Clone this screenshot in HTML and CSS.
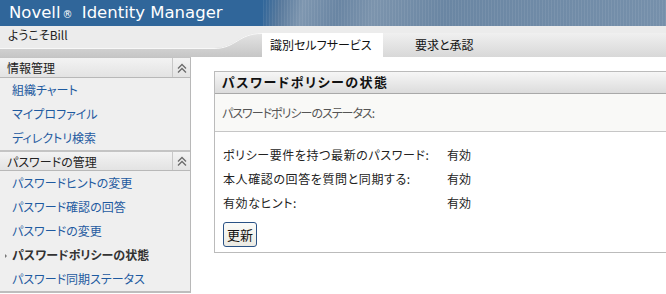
FILE: index.html
```html
<!DOCTYPE html>
<html lang="ja">
<head>
  <meta charset="UTF-8">
  <title>Novell Identity Manager</title>
  <link rel="stylesheet" href="styles.css">
</head>
<body>
  <div class="topbar">
    <div class="brand">Novell<span class="reg">®</span> Identity Manager</div>
    <div class="texture"></div>
  </div>
  <div class="subbar">
    <div class="welcome">
      <svg class="welcome-bg" width="262" height="31" viewBox="0 0 262 31">
        <defs>
          <linearGradient id="band" x1="0" y1="0" x2="0" y2="1">
            <stop offset="0" stop-color="#e4e4e4"/>
            <stop offset="1" stop-color="#c6c6c6"/>
          </linearGradient>
        </defs>
        <rect width="262" height="31" fill="#ececec"/>
        <path d="M0 22 H214 C236 22 238 7 262 7 V31 H0 Z" fill="url(#band)"/>
        <path d="M0 22.5 H214 C236 22.5 238 7.5 262 7.5" fill="none" stroke="#f8f8f8" stroke-width="1"/>
      </svg>
      <span class="welcome-text">ようこそBill</span>
    </div>
    <div class="tabs">
      <span class="tab active">識別セルフサービス</span>
      <span class="tab">要求と承認</span>
    </div>
  </div>
  <div class="main">
    <div class="sidebar">
      <div class="side-section">
        <div class="side-head">
          <span class="head-label">情報管理</span>
          <span class="toggle"><svg width="10" height="10" viewBox="0 0 10 10"><path d="M1 5.5 L5 1.5 L9 5.5 M1 9.5 L5 5.5 L9 9.5" fill="none" stroke="#6a6a6a" stroke-width="1.3"/></svg></span>
        </div>
        <a class="side-item">組織チャート</a>
        <a class="side-item">マイプロファイル</a>
        <a class="side-item">ディレクトリ検索</a>
      </div>
      <div class="side-section second">
        <div class="side-head">
          <span class="head-label">パスワードの管理</span>
          <span class="toggle"><svg width="10" height="10" viewBox="0 0 10 10"><path d="M1 5.5 L5 1.5 L9 5.5 M1 9.5 L5 5.5 L9 9.5" fill="none" stroke="#6a6a6a" stroke-width="1.3"/></svg></span>
        </div>
        <a class="side-item">パスワードヒントの変更</a>
        <a class="side-item">パスワード確認の回答</a>
        <a class="side-item">パスワードの変更</a>
        <a class="side-item active">パスワードポリシーの状態</a>
        <a class="side-item">パスワード同期ステータス</a>
      </div>
    </div>
    <div class="content">
      <div class="panel">
        <div class="panel-head">パスワードポリシーの状態</div>
        <div class="panel-desc">パスワードポリシーのステータス:</div>
        <div class="panel-body">
          <div class="status-grid">
            <span class="label">ポリシー要件を持つ最新のパスワード:</span><span>有効</span>
            <span class="label">本人確認の回答を質問と同期する:</span><span>有効</span>
            <span class="label">有効なヒント:</span><span>有効</span>
          </div>
          <button class="refresh">更新</button>
        </div>
      </div>
    </div>
  </div>
</body>
</html>
```

FILE: styles.css
```css
body { margin: 0; width: 666px; height: 294px; overflow: hidden; background: #fff; font-family: "Noto Sans CJK JP", "DejaVu Sans", sans-serif; font-size: 12px; color: #222; font-feature-settings: "palt"; }

.topbar { display: flex; height: 26px; background: #30669a; }
.brand { width: 254px; padding-left: 9px; color: #fff; font-family: "DejaVu Sans", sans-serif; font-size: 16.5px; line-height: 26px; white-space: nowrap; }
.reg { font-size: 10px; margin: 0 4px 0 2px; }
.texture { flex: 1; background: repeating-linear-gradient(90deg, rgba(255,255,255,.07) 0 1px, transparent 1px 3px), linear-gradient(100deg, #30669a 0, #58799c 18px, #7f97b0 40px, #6985a3 75px, #7c94ad 110px, #6a86a3 180px, #7690ab 100%); }

.subbar { display: flex; height: 31px; }
.welcome { position: relative; width: 262px; }
.welcome-bg { display: block; }
.welcome-text { position: absolute; left: 8px; top: 0; line-height: 18px; font-size: 12px; color: #222; }
.tabs { flex: 1; display: flex; align-items: flex-end; background: linear-gradient(#ececec 0 7px, #f0f0f0 7px, #d8d8d8 100%); }
.tab { height: 24px; line-height: 24px; padding-left: 32px; font-size: 12px; color: #111; }
.tab.active { width: 113px; padding-left: 8px; background: #fff; }

.main { display: flex; align-items: flex-start; }
.sidebar { width: 190px; background: #efefef; border-top: 1px solid #c4c4c4; border-right: 1px solid #b8b8b8; border-bottom: 2px solid #bdbdbd; }
.side-section.second { border-top: 2px solid #c4c4c4; }
.side-head { display: flex; height: 19px; background: linear-gradient(#f3f3f3, #e3e3e3); border-bottom: 1px solid #b8b8b8; }
.second .side-head { height: 18px; }
.head-label { flex: 1; padding-left: 7px; line-height: 19px; color: #222; }
.toggle { width: 17px; border-left: 1px solid #c8c8c8; display: flex; align-items: center; justify-content: center; }
.side-item { display: block; height: 24px; line-height: 23px; padding-left: 12px; color: #1e5aa0; text-decoration: none; }
.side-item.active { position: relative; color: #333; font-weight: bold; }
.side-item.active::before { content: ""; position: absolute; left: 5px; top: 11px; border-left: 2px solid #777; border-top: 2px solid transparent; border-bottom: 2px solid transparent; }

.content { flex: 1; margin: 14px -10px 0 23px; }
.panel { border: 1px solid #bbb; }
.panel-head { height: 21px; line-height: 20px; padding-left: 7px; background: linear-gradient(#f6f6f6, #dcdcdc); border-bottom: 1px solid #a9a9a9; font-size: 13px; font-weight: bold; letter-spacing: 1.5px; color: #111; }
.panel-desc { height: 37px; line-height: 37px; padding-left: 7px; background: #f9f9f7; border-bottom: 1px solid #c6c6c6; color: #555; letter-spacing: -1px; }
.panel-body { padding: 10px 8px 5px 8px; }
.status-grid { display: grid; grid-template-columns: 224px auto; grid-auto-rows: 24px; align-items: center; }
.label { letter-spacing: 0.6px; }
.refresh { display: block; margin-top: 8px; width: 34px; height: 25px; padding: 0; border: 1px solid #2a5285; border-radius: 3px; background: linear-gradient(#fbfbf8, #ebeae3); font-family: "Noto Sans CJK JP", sans-serif; font-size: 13px; color: #111; }
```
